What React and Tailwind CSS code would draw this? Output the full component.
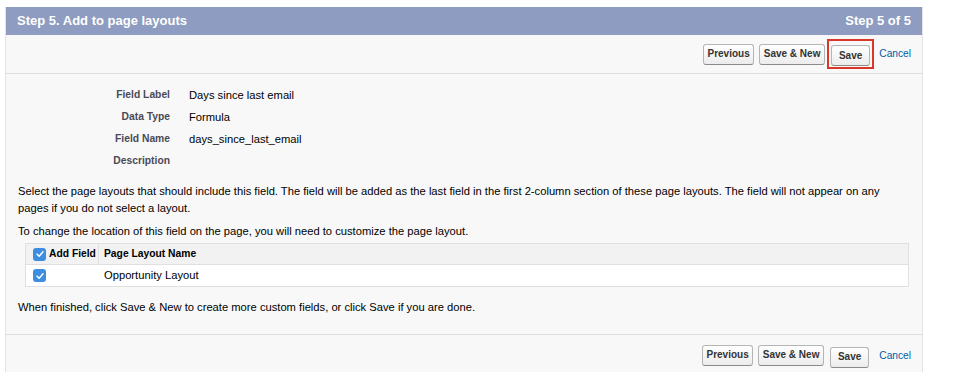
import React from 'react';

const fields = [
  { label: 'Field Label', value: 'Days since last email' },
  { label: 'Data Type', value: 'Formula' },
  { label: 'Field Name', value: 'days_since_last_email' },
  { label: 'Description', value: '' },
];

const Check = () => (
  <span className="inline-flex w-[13px] h-[13px] items-center justify-center rounded-[3px] bg-[#3d8de0]">
    <svg viewBox="0 0 12 12" className="w-[10px] h-[10px]">
      <path d="M2.5 6.2 L5 8.6 L9.6 3.4" fill="none" stroke="#fff" strokeWidth="1.8" strokeLinecap="round" strokeLinejoin="round" />
    </svg>
  </span>
);

const Btn = ({ children, wide }) => (
  <button className={`h-[21px] ${wide ? 'px-[7px]' : 'px-[3.5px]'} rounded-[3px] border border-[#b5b5b5] border-b-[#8a8a8a] bg-gradient-to-b from-white to-[#ececec] text-[10px] font-bold text-[#333] leading-none whitespace-nowrap`}>
    {children}
  </button>
);

const ButtonRow = ({ highlight }) => (
  <div className="flex items-center justify-end pr-[11px] gap-[5px]">
    <Btn>Previous</Btn>
    <Btn>Save &amp; New</Btn>
    {highlight ? (
      <div className="-ml-[3px] px-[2px] py-[1px] border-2 border-[#d9372a]">
        <Btn wide>Save</Btn>
      </div>
    ) : (
      <div className="ml-[1px]">
        <Btn wide>Save</Btn>
      </div>
    )}
    <a className={`${highlight ? '' : 'ml-[5px]'} text-[10.2px] text-[#015ba7]`}>Cancel</a>
  </div>
);

export default function App() {
  return (
    <div className="w-[964px] h-[372px] bg-white overflow-hidden pt-[7px] pl-[5px] font-['Liberation_Sans',Arial,sans-serif]">
      <div className="w-[918px] bg-[#f8f8f8] border-l border-r border-[#e3e3e3]">
        <div className="h-[28px] bg-[#8d9cc0] flex items-center justify-between px-[11px] text-white font-bold text-[13px]">
          <span>Step 5. Add to page layouts</span>
          <span>Step 5 of 5</span>
        </div>
        <div className="h-[39px] flex items-center justify-end border-b border-[#dedede]">
          <ButtonRow highlight />
        </div>

        <div className="pt-[10px]">
          {fields.map((f) => (
            <div key={f.label} className="flex items-center h-[22px]">
              <div className="w-[164px] text-right text-[10.3px] font-bold text-[#4a4a56]">{f.label}</div>
              <div className="pl-[19px] text-[11.2px] text-black">{f.value}</div>
            </div>
          ))}
        </div>

        <div className="px-[12px] pt-[11px] text-[11.2px] text-black leading-[17px]">
          <p>
            Select the page layouts that should include this field. The field will be added as the last field in the first 2-column section of these page layouts. The field will not appear on any pages if you do not select a layout.
          </p>
          <p className="mt-[6px]">To change the location of this field on the page, you will need to customize the page layout.</p>
        </div>

        <div className="mt-[3px] ml-[19px] mr-[13px] border border-[#e0e0e0] text-[11.2px]">
          <div className="flex items-center h-[21px] bg-[#f2f2f3] border-b border-[#e0e0e0] font-bold text-[10.3px] text-black">
            <div className="w-[73px] flex items-center gap-[3px] pl-[7px] border-r border-[#e0e0e0] h-full whitespace-nowrap">
              <Check />
              <span>Add Field</span>
            </div>
            <div className="pl-[5px]">Page Layout Name</div>
          </div>
          <div className="flex items-center h-[21px] bg-white">
            <div className="w-[73px] pl-[7px] flex items-center">
              <Check />
            </div>
            <div className="pl-[5px]">Opportunity Layout</div>
          </div>
        </div>

        <p className="px-[12px] pt-[12px] pb-[18px] text-[11.2px] text-black border-b border-[#dedede]">
          When finished, click Save &amp; New to create more custom fields, or click Save if you are done.
        </p>

        <div className="h-[41px] flex items-center justify-end">
          <ButtonRow />
        </div>
      </div>
    </div>
  );
}
